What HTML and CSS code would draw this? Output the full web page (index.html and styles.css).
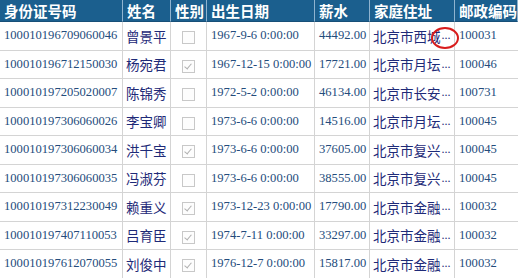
FILE: index.html
```html
<!DOCTYPE html>
<html>
<head>
<meta charset="utf-8">
<link rel="stylesheet" href="styles.css">
</head>
<body>
<div class="grid">
  <div class="h">身份证号码</div><div class="h">姓名</div><div class="h">性别</div><div class="h">出生日期</div><div class="h">薪水</div><div class="h">家庭住址</div><div class="h">邮政编码</div>

  <div class="c num">100010196709060046</div><div class="c cjk">曾景平</div><div class="c chk"><span class="box"></span></div><div class="c num">1967-9-6 0:00:00</div><div class="c num">44492.00</div><div class="c cjk addr">北京市西城<span class="dots">...</span><span class="ring"></span></div><div class="c num">100031</div>

  <div class="c num">100010196712150030</div><div class="c cjk">杨宛君</div><div class="c chk"><span class="box on"></span></div><div class="c num">1967-12-15 0:00:00</div><div class="c num">17721.00</div><div class="c cjk">北京市月坛<span class="dots">...</span></div><div class="c num">100046</div>

  <div class="c num">100010197205020007</div><div class="c cjk">陈锦秀</div><div class="c chk"><span class="box"></span></div><div class="c num">1972-5-2 0:00:00</div><div class="c num">46134.00</div><div class="c cjk">北京市长安<span class="dots">...</span></div><div class="c num">100731</div>

  <div class="c num">100010197306060026</div><div class="c cjk">李宝卿</div><div class="c chk"><span class="box"></span></div><div class="c num">1973-6-6 0:00:00</div><div class="c num">14516.00</div><div class="c cjk">北京市月坛<span class="dots">...</span></div><div class="c num">100045</div>

  <div class="c num">100010197306060034</div><div class="c cjk">洪千宝</div><div class="c chk"><span class="box on"></span></div><div class="c num">1973-6-6 0:00:00</div><div class="c num">37605.00</div><div class="c cjk">北京市复兴<span class="dots">...</span></div><div class="c num">100045</div>

  <div class="c num">100010197306060035</div><div class="c cjk">冯淑芬</div><div class="c chk"><span class="box"></span></div><div class="c num">1973-6-6 0:00:00</div><div class="c num">38555.00</div><div class="c cjk">北京市复兴<span class="dots">...</span></div><div class="c num">100045</div>

  <div class="c num">100010197312230049</div><div class="c cjk">赖重义</div><div class="c chk"><span class="box on"></span></div><div class="c num">1973-12-23 0:00:00</div><div class="c num">17790.00</div><div class="c cjk">北京市金融<span class="dots">...</span></div><div class="c num">100032</div>

  <div class="c num">100010197407110053</div><div class="c cjk">吕育臣</div><div class="c chk"><span class="box on"></span></div><div class="c num">1974-7-11 0:00:00</div><div class="c num">33297.00</div><div class="c cjk">北京市金融<span class="dots">...</span></div><div class="c num">100032</div>

  <div class="c num">100010197612070055</div><div class="c cjk">刘俊中</div><div class="c chk"><span class="box on"></span></div><div class="c num">1976-12-7 0:00:00</div><div class="c num">15817.00</div><div class="c cjk">北京市金融<span class="dots">...</span></div><div class="c num">100032</div>
</div>
</body>
</html>
```
FILE: styles.css
```css
html, body {
  margin: 0;
  padding: 0;
  background: #ffffff;
  overflow: hidden;
}
.grid {
  display: grid;
  grid-template-columns: 123px 48px 36px 108px 55px 85px 63px;
  grid-template-rows: 22px;
  grid-auto-rows: 28.5px;
  width: 518px;
}
.h {
  background: #1b5f8e;
  color: #ffffff;
  font-family: "Noto Sans CJK SC", sans-serif;
  font-weight: bold;
  font-size: 14.5px;
  line-height: 21px;
  padding-left: 4px;
  border-right: 1px solid #8fb3cf;
  border-bottom: 1px solid #174f78;
  box-sizing: border-box;
  white-space: nowrap;
  overflow: hidden;
}
.h:last-child { border-right: none; }
.c {
  box-sizing: border-box;
  border-right: 1px solid #d4d4d4;
  border-bottom: 1px solid #d4d4d4;
  display: flex;
  align-items: center;
  padding-left: 3px;
  white-space: nowrap;
  overflow: hidden;
  position: relative;
}
.c:nth-child(7n) { border-right: none; }
.num {
  font-family: "Liberation Serif", serif;
  font-size: 12.6px;
  color: #244c7c;
  padding-left: 4px;
}
.cjk {
  font-family: "Noto Sans CJK SC", sans-serif;
  font-size: 13.5px;
  color: #1e2a78;
}
.dots {
  font-family: "Liberation Serif", serif;
  font-size: 12px;
  margin-left: 1px;
}
.chk {
  justify-content: center;
  padding-left: 0;
}
.box {
  width: 13px;
  height: 13px;
  box-sizing: border-box;
  border: 1px solid #c8c8c8;
  background: #fdfdfd;
  margin-top: 4px;
  position: relative;
}
.box.on::after {
  content: "";
  position: absolute;
  left: 3px;
  top: 1px;
  width: 3px;
  height: 6px;
  border-right: 1.5px solid #b0b0b0;
  border-bottom: 1.5px solid #b0b0b0;
  transform: rotate(40deg);
}
.addr { overflow: visible; z-index: 2; }
.ring {
  position: absolute;
  left: 61px;
  top: 5px;
  width: 28px;
  height: 22px;
  border: 2px solid #d81c1c;
  border-radius: 50%;
  box-sizing: border-box;
}
```
